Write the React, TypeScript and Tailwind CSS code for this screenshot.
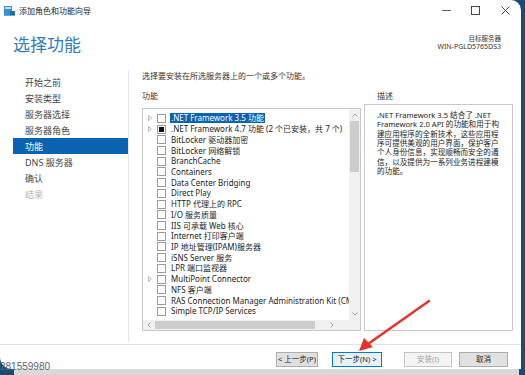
import React from "react";

const FONT = { fontFamily: '"Noto Sans", "Noto Sans CJK SC", sans-serif' };

const items: { t: string; arrow?: boolean; state?: "ind"; sel?: boolean }[] = [
  { t: ".NET Framework 3.5 功能", arrow: true, sel: true },
  { t: ".NET Framework 4.7 功能 (2 个已安装，共 7 个)", arrow: true, state: "ind" },
  { t: "BitLocker 驱动器加密" },
  { t: "BitLocker 网络解锁" },
  { t: "BranchCache" },
  { t: "Containers" },
  { t: "Data Center Bridging" },
  { t: "Direct Play" },
  { t: "HTTP 代理上的 RPC" },
  { t: "I/O 服务质量" },
  { t: "IIS 可承载 Web 核心" },
  { t: "Internet 打印客户端" },
  { t: "IP 地址管理(IPAM)服务器" },
  { t: "iSNS Server 服务" },
  { t: "LPR 端口监视器" },
  { t: "MultiPoint Connector", arrow: true },
  { t: "NFS 客户端" },
  { t: "RAS Connection Manager Administration Kit (CMAK)" },
  { t: "Simple TCP/IP Services" },
];

const nav = ["开始之前", "安装类型", "服务器选择", "服务器角色", "功能", "DNS 服务器", "确认", "结果"];

const desc = [
  ".NET Framework 3.5 结合了 .NET",
  "Framework 2.0 API 的功能和用于构",
  "建应用程序的全新技术，这些应用程",
  "序可提供美观的用户界面，保护客户",
  "个人身份信息，实现顺畅而安全的通",
  "信，以及提供为一系列业务进程建模",
  "的功能。",
];

export default function App() {
  return (
    <div className="relative w-[525px] h-[375px] overflow-hidden bg-[#1d4a73] flex flex-col" style={FONT}>
      {/* window */}
      <div className="w-[521px] h-[369px] bg-white rounded-tr-[10px] rounded-bl-[12px] flex flex-col text-[#1e1e1e]">
        {/* title bar */}
        <div className="h-[21px] flex items-center pl-[3px]">
          <svg width="13" height="13" viewBox="0 0 13 13">
            <rect x="1" y="2" width="8" height="9" fill="#3a8fd0" />
            <rect x="2" y="3" width="6" height="2" fill="#bfe0f7" />
            <rect x="7" y="7" width="5" height="5" fill="#1f6fb0" />
            <rect x="1" y="11" width="11" height="1" fill="#6aa6d6" />
          </svg>
          <span className="ml-[3px] text-[8px] leading-none text-[#222]">添加角色和功能向导</span>
          <div className="ml-auto flex items-center h-full">
            <div className="w-[29px] flex justify-center">
              <svg width="9" height="9"><line x1="0" y1="4.5" x2="9" y2="4.5" stroke="#333" strokeWidth="0.8" /></svg>
            </div>
            <div className="w-[29px] flex justify-center">
              <svg width="9" height="9"><rect x="0.5" y="0.5" width="8" height="8" fill="none" stroke="#333" strokeWidth="0.9" /></svg>
            </div>
            <div className="w-[31px] flex justify-center">
              <svg width="9" height="9"><path d="M0.5 0.5 L8.5 8.5 M8.5 0.5 L0.5 8.5" stroke="#333" strokeWidth="0.9" /></svg>
            </div>
          </div>
        </div>

        {/* header */}
        <div className="h-[49px] flex items-start justify-between pl-[13px] pr-[20px]">
          <div className="mt-[14px] text-[17px] leading-[20px] text-[#2f7dbd]">选择功能</div>
          <div className="mt-[14px] flex flex-col items-end text-[6.5px] leading-[8px] text-[#333]">
            <span>目标服务器</span>
            <span className="text-[7px]">WIN-PGLD5765DS3</span>
          </div>
        </div>

        {/* body */}
        <div className="flex h-[272px]">
          {/* nav */}
          <div className="w-[129px] border-r border-[#e6e6e6] pt-[4px] flex flex-col">
            {nav.map((n, i) => (
              <div
                key={n}
                className={
                  "ml-[13px] h-[16px] pl-[12px] flex items-center text-[9px] leading-none " +
                  (n === "功能"
                    ? "bg-[#0a63b0] text-white"
                    : i === 7
                    ? "text-[#b5b5b5]"
                    : "text-[#444]")
                }
              >
                {n}
              </div>
            ))}
          </div>

          {/* main */}
          <div className="flex-1 pl-[13px] pr-[8px] flex flex-col">
            <div className="mt-[1px] h-[10px] text-[8px] leading-[10px] text-[#333]">
              选择要安装在所选服务器上的一个或多个功能。
            </div>
            <div className="flex gap-[3px] mt-[10px]">
              {/* features */}
              <div className="w-[219px] flex flex-col">
                <div className="h-[10px] text-[8px] leading-[10px] text-[#333]">功能</div>
                <div className="mt-[7px] h-[223px] border border-[#c8c8c8] flex flex-col">
                  <div className="flex flex-1 min-h-0">
                    <div className="flex-1 min-w-0 overflow-hidden pt-[4px]">
                      {items.map((it) => (
                        <div key={it.t} className="h-[10.72px] flex items-center whitespace-nowrap">
                          <div className="w-[14px] shrink-0 flex justify-center">
                            {it.arrow && (
                              <svg width="4" height="6" viewBox="0 0 4 6">
                                <path d="M0.5 0.5 L3.5 3 L0.5 5.5 Z" fill="none" stroke="#a6a6a6" strokeWidth="0.8" />
                              </svg>
                            )}
                          </div>
                          <div className="w-[9px] h-[9px] shrink-0 border border-[#9a9a9a] bg-white flex items-center justify-center">
                            {it.state === "ind" && <div className="w-[5px] h-[5px] bg-[#111]" />}
                          </div>
                          <span
                            className={
                              "ml-[4px] shrink-0 text-[8px] leading-[10px] px-[1px] " +
                              (it.sel ? "bg-[#0a63b0] text-white" : "text-[#222]")
                            }
                          >
                            {it.t}
                          </span>
                        </div>
                      ))}
                    </div>
                    {/* v scroll */}
                    <div className="w-[11px] shrink-0 bg-[#f0f0f0] flex flex-col items-center">
                      <div className="h-[12px] flex items-center">
                        <svg width="6" height="4"><path d="M0.5 3.5 L3 1 L5.5 3.5" fill="none" stroke="#9a9a9a" strokeWidth="0.9" /></svg>
                      </div>
                      <div className="w-[9px] h-[51px] bg-[#cdcdcd]" />
                      <div className="flex-1" />
                      <div className="h-[12px] flex items-center">
                        <svg width="6" height="4"><path d="M0.5 0.5 L3 3 L5.5 0.5" fill="none" stroke="#9a9a9a" strokeWidth="0.9" /></svg>
                      </div>
                    </div>
                  </div>
                  {/* h scroll */}
                  <div className="h-[10px] shrink-0 flex bg-[#f0f0f0]">
                    <div className="flex-1 flex items-center">
                      <div className="w-[12px] flex justify-center">
                        <svg width="4" height="6"><path d="M3.5 0.5 L1 3 L3.5 5.5" fill="none" stroke="#9a9a9a" strokeWidth="0.9" /></svg>
                      </div>
                      <div className="w-[160px] h-[8px] bg-[#cdcdcd]" />
                      <div className="flex-1 flex justify-center">
                        <svg width="4" height="6"><path d="M0.5 0.5 L3 3 L0.5 5.5" fill="none" stroke="#9a9a9a" strokeWidth="0.9" /></svg>
                      </div>
                    </div>
                    <div className="w-[11px] bg-[#f0f0f0]" />
                  </div>
                </div>
              </div>

              {/* description */}
              <div className="w-[149px] flex flex-col">
                <div className="h-[10px] pl-[13px] text-[8px] leading-[10px] text-[#333]">描述</div>
                <div className="mt-[3px] h-[227px] border border-[#c8c8c8] pl-[12px] pt-[6px]">
                  {desc.map((l) => (
                    <div key={l} className="h-[9.4px] flex items-center text-[7.6px] leading-none whitespace-nowrap text-[#222]">
                      {l}
                    </div>
                  ))}
                </div>
              </div>
            </div>
          </div>
        </div>

        {/* footer */}
        <div className="flex-1 border-t border-[#e3e3e3] mt-[2px] flex items-start justify-end pr-[13px] pt-[7px]">
          <button className="w-[42px] h-[15px] border border-[#adadad] bg-[#e1e1e1] text-[7.5px] leading-none text-[#222]">
            &lt; 上一步(P)
          </button>
          <button className="ml-[14px] w-[50px] h-[15px] border border-[#0078d7] bg-[#e5f1fb] text-[7.5px] leading-none text-[#222]">
            下一步(N) &gt;
          </button>
          <button className="ml-[22px] w-[48px] h-[15px] border border-[#c4c4c4] bg-[#f4f4f4] text-[7.5px] leading-none text-[#a0a0a0]">
            安装(I)
          </button>
          <button className="ml-[7px] w-[49px] h-[15px] border border-[#adadad] bg-[#e1e1e1] text-[7.5px] leading-none text-[#222]">
            取消
          </button>
        </div>
      </div>

      {/* bottom strip: background window */}
      <div className="flex-1 ml-[14px] mr-[6px] bg-[#d9d9d9]" />

      {/* watermark */}
      <div className="absolute left-0 top-[361px] text-[10px] leading-[12px] text-[#5c6470]" style={{ fontFamily: '"Liberation Sans", sans-serif' }}>
        281559980
      </div>

      {/* red annotation arrow */}
      <svg className="absolute left-0 top-0 pointer-events-none" width="525" height="375">
        <line x1="429" y1="301" x2="368" y2="344" stroke="#e5322a" strokeWidth="2.5" strokeLinecap="round" />
        <path d="M359 351 L364 338 L373 347 Z" fill="#e5322a" />
      </svg>
    </div>
  );
}
